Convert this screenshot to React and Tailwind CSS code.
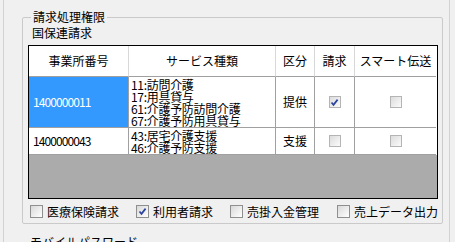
import React from "react";

const Box = ({ checked, small }) => (
  <span
    className={
      small
        ? "flex items-center justify-center w-[12px] h-[12px] border border-[#b4b4b4] bg-linear-to-br from-[#dcdcdc] to-[#fbfbfb]"
        : "flex items-center justify-center w-[13px] h-[13px] shrink-0 border border-[#8f8f8f] bg-linear-to-br from-[#d9d9d9] to-[#ffffff]"
    }
  >
    {checked && (
      <svg width="9" height="9" viewBox="0 0 9 9">
        <path d="M1.5 4.5 L3.5 6.8 L7.6 1.6" fill="none" stroke="#2c44a0" strokeWidth="1.7" />
      </svg>
    )}
  </span>
);

const rows = [
  {
    id: "1400000011",
    services: ["11:訪問介護", "17:用具貸与", "61:介護予防訪問介護", "67:介護予防用具貸与"],
    kind: "提供",
    claim: true,
    smart: false,
    selected: true,
    h: "h-[51px]",
  },
  {
    id: "1400000043",
    services: ["43:居宅介護支援", "46:介護予防支援"],
    kind: "支援",
    claim: false,
    smart: false,
    selected: false,
    h: "h-[27px]",
  },
];

const options = [
  { label: "医療保険請求", checked: false, w: "w-[106px]" },
  { label: "利用者請求", checked: true, w: "w-[94px]" },
  { label: "売掛入金管理", checked: false, w: "w-[107px]" },
  { label: "売上データ出力", checked: false, w: "w-[100px]" },
];

export default function App() {
  return (
    <div className="w-[455px] h-[242px] overflow-hidden bg-[#f0f0f0] flex text-[12px] leading-[12px] text-black font-['Noto_Sans_CJK_JP','Noto_Sans',sans-serif]">
      <div className="w-[3px] shrink-0" />
      <div className="w-[447px] shrink-0 border-l border-r border-[#d2d2d2] pl-[18px] pt-[11px]">
        {/* 請求処理権限 */}
        <fieldset className="w-[421px] border border-[#cacaca] rounded-[2px] pl-[5px] pb-[5px]">
          <legend className="ml-[3px] px-[2px] leading-[12px]">請求処理権限</legend>
          <div className="mt-[4px] ml-[4px] leading-[12px]">国保連請求</div>

          {/* grid */}
          <div className="mt-[6px] w-[410px] border border-black bg-[#ababab]">
            <div className="grid grid-cols-[100px_147px_39px_40px_81px] bg-white">
              {["事業所番号", "サービス種類", "区分", "請求", "スマート伝送"].map((t, i) => (
                <div
                  key={t}
                  className={`h-[31px] flex items-center justify-center border-b border-[#a0a0a0] ${i < 4 ? "border-r border-r-[#d8d8d8]" : ""}`}
                >
                  {t}
                </div>
              ))}
              {rows.map((r) => (
                <React.Fragment key={r.id}>
                  <div
                    className={`${r.h} flex items-center pl-[4px] border-r border-b border-[#a0a0a0] tracking-[-0.9px] ${r.selected ? "bg-[#3399ff] text-white" : ""}`}
                  >
                    {r.id}
                  </div>
                  <div className={`${r.h} overflow-hidden pl-[2px] pt-[2px] border-r border-b border-[#a0a0a0] whitespace-nowrap`}>
                    {r.services.map((s) => (
                      <div key={s} className="h-[12px] leading-[12px] tracking-[-0.3px]">
                        {s}
                      </div>
                    ))}
                  </div>
                  <div className={`${r.h} flex items-center justify-center border-r border-b border-[#a0a0a0]`}>{r.kind}</div>
                  <div className={`${r.h} flex items-center justify-center border-r border-b border-[#a0a0a0]`}>
                    <Box small checked={r.claim} />
                  </div>
                  <div className={`${r.h} flex items-center justify-center border-b border-[#a0a0a0]`}>
                    <Box small checked={r.smart} />
                  </div>
                </React.Fragment>
              ))}
            </div>
            <div className="h-[43px]" />
          </div>

          {/* options */}
          <div className="mt-[6px] ml-[2px] h-[13px] flex items-center">
            {options.map((o) => (
              <div key={o.label} className={`${o.w} flex items-center gap-[4px] shrink-0 whitespace-nowrap`}>
                <Box checked={o.checked} />
                <span>{o.label}</span>
              </div>
            ))}
          </div>
        </fieldset>

        <fieldset className="mt-[12px] w-[421px] h-[40px] border border-[#cacaca] rounded-[2px]">
          <legend className="ml-[5px] px-[2px] leading-[12px]">モバイルパスワード</legend>
        </fieldset>
      </div>
    </div>
  );
}
